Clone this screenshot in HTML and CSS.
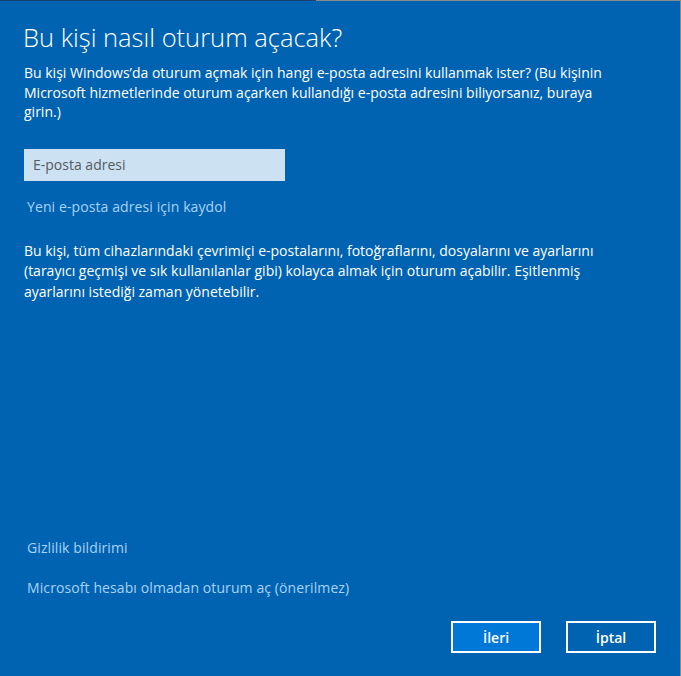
FILE: index.html
```html
<!DOCTYPE html>
<html lang="tr">
<head>
<meta charset="utf-8">
<link rel="stylesheet" href="styles.css">
</head>
<body>
<div class="window">
  <div class="topline"><div class="topline-dark"></div><div class="topline-grey"></div></div>
  <div class="content">
    <h1 class="title">Bu kişi nasıl oturum açacak?</h1>
    <p class="text">Bu kişi Windows’da oturum açmak için hangi e-posta adresini kullanmak ister? (Bu kişinin<br>Microsoft hizmetlerinde oturum açarken kullandığı e-posta adresini biliyorsanız, buraya<br>girin.)</p>
    <div class="input">E-posta adresi</div>
    <a class="link signup">Yeni e-posta adresi için kaydol</a>
    <p class="text text2">Bu kişi, tüm cihazlarındaki çevrimiçi e-postalarını, fotoğraflarını, dosyalarını ve ayarlarını<br>(tarayıcı geçmişi ve sık kullanılanlar gibi) kolayca almak için oturum açabilir. Eşitlenmiş<br>ayarlarını istediği zaman yönetebilir.</p>
    <div class="spacer"></div>
    <a class="link privacy">Gizlilik bildirimi</a>
    <a class="link local">Microsoft hesabı olmadan oturum aç (önerilmez)</a>
    <div class="buttons">
      <button class="btn primary">İleri</button>
      <button class="btn">İptal</button>
    </div>
  </div>
</div>
</body>
</html>
```
FILE: styles.css
```css
html, body {
  margin: 0;
  padding: 0;
  width: 681px;
  height: 676px;
  overflow: hidden;
  background: #0063b1;
}
.window {
  width: 680px;
  height: 676px;
  border-right: 1px solid #8a8a8a;
  background: #0063b1;
  display: flex;
  flex-direction: column;
  font-family: "Open Sans", "Noto Sans", sans-serif;
  color: #ffffff;
}
.topline {
  display: flex;
  height: 1px;
  flex: none;
}
.topline-dark { width: 316px; background: #1b3f6e; }
.topline-grey { flex: 1; background: #8a8a8a; }
.content {
  flex: 1;
  display: flex;
  flex-direction: column;
  padding: 0 24px 23px 24px;
}
.title {
  margin: 20px 0 0 -1px;
  font-size: 25.5px;
  font-weight: 300;
  line-height: 32px;
}
.text {
  margin: 10px 0 0 0;
  font-size: 14px;
  line-height: 19.5px;
  white-space: nowrap;
}
.text1 { letter-spacing: 0.1px; }
.input {
  margin-top: 27px;
  width: 261px;
  height: 32px;
  box-sizing: border-box;
  background: #cce2f2;
  color: #555a60;
  font-size: 14px;
  line-height: 32px;
  padding-left: 9px;
}
.link {
  display: block;
  color: #a8d2f5;
  font-size: 14px;
  line-height: 20px;
  margin-left: 3px;
  letter-spacing: 0.1px;
}
.signup { margin-top: 16px; }
.text2 { margin-top: 24px; line-height: 20.5px; }
.spacer { flex: 1; }
.local { margin-top: 20px; }
.buttons {
  display: flex;
  justify-content: flex-end;
  gap: 25px;
  margin-top: 23px;
}
.btn {
  width: 90px;
  height: 32px;
  box-sizing: border-box;
  border: 2px solid #ffffff;
  background: transparent;
  color: #ffffff;
  font-family: "Open Sans", "Noto Sans", sans-serif;
  font-size: 14px;
  font-weight: 600;
  padding: 0;
}
.btn.primary { background: #0078d7; }
```
